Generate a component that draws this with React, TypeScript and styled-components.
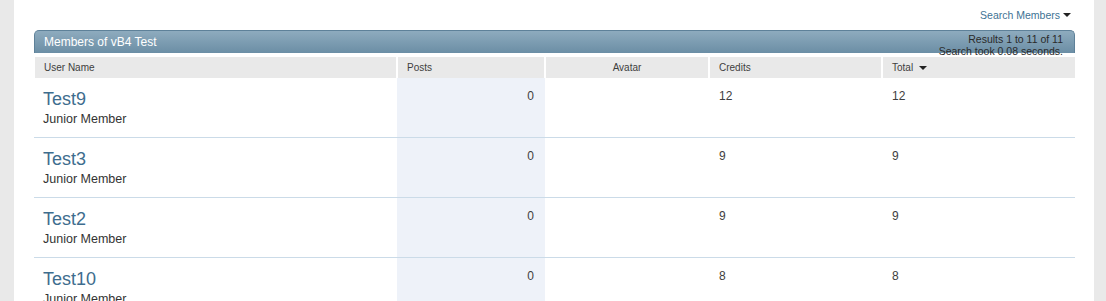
import styled, { createGlobalStyle } from "styled-components";

const Global = createGlobalStyle`
  html, body {
    margin: 0;
    padding: 0;
    background: #e9e9e9;
    font-family: "Liberation Sans", Arial, sans-serif;
    color: #3e3e3e;
  }
`;

const cols = "363px 148px 164px 173px 1fr";

const members = [
  { name: "Test9", title: "Junior Member", posts: 0, credits: 12, total: 12 },
  { name: "Test3", title: "Junior Member", posts: 0, credits: 9, total: 9 },
  { name: "Test2", title: "Junior Member", posts: 0, credits: 9, total: 9 },
  { name: "Test10", title: "Junior Member", posts: 0, credits: 8, total: 8 },
];

export default function App() {
  return (
    <>
      <Global />
      <Page>
        <Sheet>
          <TopBar>
            <SearchLink href="#">
              Search Members
              <Caret $size={4} $gap={3} />
            </SearchLink>
          </TopBar>

          <BlockHead>
            <BlockTitle>Members of vB4 Test</BlockTitle>
            <Meta>
              <div>Results 1 to 11 of 11</div>
              <div>Search took 0.08 seconds.</div>
            </Meta>
          </BlockHead>

          <Table>
            <HeadRow>
              <HeadCell>User Name</HeadCell>
              <HeadCell>Posts</HeadCell>
              <HeadCell $center>Avatar</HeadCell>
              <HeadCell>Credits</HeadCell>
              <HeadCell>
                Total
                <Caret $size={4} $gap={6} />
              </HeadCell>
            </HeadRow>

            {members.map((m) => (
              <Row key={m.name}>
                <NameCell>
                  <UserLink href="#">{m.name}</UserLink>
                  <UserTitle>{m.title}</UserTitle>
                </NameCell>
                <NumCell $shade $right>
                  {m.posts}
                </NumCell>
                <NumCell />
                <NumCell>{m.credits}</NumCell>
                <NumCell>{m.total}</NumCell>
              </Row>
            ))}
          </Table>
        </Sheet>
      </Page>
    </>
  );
}

const Page = styled.div`
  padding: 0 12px 0 14px;
  height: 301px;
  overflow: hidden;
`;

const Sheet = styled.div`
  background: #fff;
  padding: 0 19px 0 20px;
  min-height: 301px;
`;

const TopBar = styled.div`
  display: flex;
  justify-content: flex-end;
  height: 30px;
  padding: 8px 4px 0 0;
  box-sizing: border-box;
`;

const SearchLink = styled.a`
  display: flex;
  align-items: center;
  height: 14px;
  font-size: 10.5px;
  line-height: 14px;
  color: #417394;
  text-decoration: none;
`;

const Caret = styled.span<{ $size: number; $gap: number }>`
  display: inline-block;
  width: 0;
  height: 0;
  border-left: ${({ $size }) => $size}px solid transparent;
  border-right: ${({ $size }) => $size}px solid transparent;
  border-top: ${({ $size }) => $size}px solid #222;
  margin-left: ${({ $gap }) => $gap}px;
`;

const BlockHead = styled.div`
  display: flex;
  justify-content: space-between;
  align-items: flex-start;
  height: 23px;
  box-sizing: border-box;
  border: 1px solid #5e8199;
  border-bottom: none;
  border-radius: 5px 5px 0 0;
  background: linear-gradient(#8eabbe, #6b8ea5);
  padding: 0 11px 0 9px;
`;

const BlockTitle = styled.h2`
  margin: 0;
  padding-top: 4px;
  font-size: 12px;
  font-weight: normal;
  line-height: 14px;
  color: #fff;
`;

const Meta = styled.div`
  padding-top: 2px;
  font-size: 10.5px;
  line-height: 12px;
  text-align: right;
  color: #2a2a2a;
  white-space: nowrap;
`;

const Table = styled.div`
  margin-top: 4px;
`;

const HeadRow = styled.div`
  display: grid;
  grid-template-columns: ${cols};
`;

const HeadCell = styled.div<{ $center?: boolean }>`
  display: flex;
  align-items: center;
  justify-content: ${({ $center }) => ($center ? "center" : "flex-start")};
  height: 21px;
  background: #e9e9e9;
  border-left: 1px solid #fff;
  border-right: 1px solid #fff;
  padding-left: ${({ $center }) => ($center ? 0 : 9)}px;
  font-size: 10px;
  line-height: 21px;
  color: #3e3e3e;

  &:last-child {
    border-right: none;
  }
`;

const Row = styled.div`
  display: grid;
  grid-template-columns: ${cols};
`;

const NameCell = styled.div`
  height: 60px;
  box-sizing: border-box;
  padding: 11px 0 0 9px;
  border-bottom: 1px solid #cbdbe8;
`;

const UserLink = styled.a`
  display: block;
  font-size: 18px;
  line-height: 21.6px;
  color: #3e6d8e;
  text-decoration: none;
`;

const UserTitle = styled.div`
  margin-top: 1px;
  font-size: 12.5px;
  line-height: 15px;
  color: #333;
`;

const NumCell = styled.div<{ $shade?: boolean; $right?: boolean }>`
  height: 60px;
  box-sizing: border-box;
  padding: 11px ${({ $right }) => ($right ? "11px" : "0")} 0
    ${({ $right }) => ($right ? "0" : "10px")};
  border-bottom: 1px solid #cbdbe8;
  background: ${({ $shade }) => ($shade ? "#eef2f9" : "transparent")};
  text-align: ${({ $right }) => ($right ? "right" : "left")};
  font-size: 12px;
  line-height: 15px;
  color: #3e3e3e;
`;
